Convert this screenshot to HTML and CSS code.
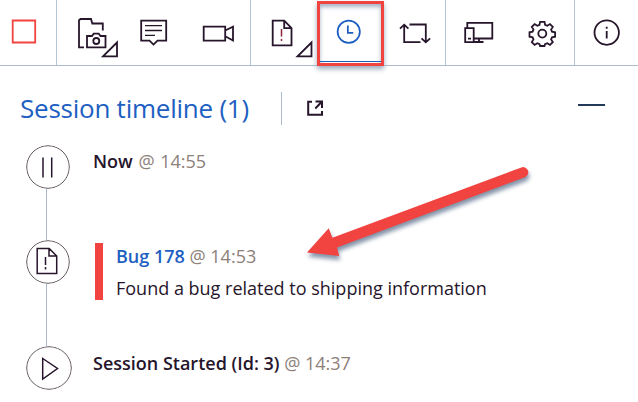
FILE: index.html
```html
<!DOCTYPE html>
<html lang="en">
<head>
<meta charset="utf-8">
<title>Session timeline</title>
<link rel="stylesheet" href="styles.css">
</head>
<body>
<nav class="toolbar">
  <div class="group stop"><svg viewBox="0 0 56 65"><path class="red" d="M12.700 20.500h22.500v22H12.700z"/></svg></div>
  <div class="group capture">
    <svg viewBox="57 0 66 65"><path d="M84 47.300h-5V20.200l1.500-1.200H91l1.300 4.500h10.500v7M87 36h5l1.700-2.300h5L100.500 36h5v11.300H87z"/><circle cx="96.300" cy="41" r="3"/><path d="M117 42.500v13.800h-14z"/></svg>
    <svg viewBox="123 0 62 65"><path d="M141.200 20.600h25v20h-8.700l-4 4-4-4h-8.300z"/><path class="thin" d="M145 25.600h17M145 30.500h17M145 35.400h10"/></svg>
    <svg viewBox="185 0 65 65"><path d="M203.700 26.600h21.500v14h-21.500zM225.200 30.500l7.800-3.900v14l-7.800-4.300"/></svg>
  </div>
  <div class="group bug"><svg viewBox="251 0 65 65"><path d="M272.700 20.600h11.500l7.300 7.500v17.200h-18.800zM284.200 20.600v7.500h7.300"/><path class="mark" d="M281.500 29v7.500M281.500 39v2"/><path d="M311.500 42.500v13.800h-14z"/></svg></div>
  <div class="group history"><svg viewBox="320 4 61 58"><circle class="blue" cx="348.700" cy="32.300" r="11.300"/><path class="blue" d="M347.800 26v7.300h5.500"/></svg></div>
  <div class="group replay"><svg viewBox="385 0 60 65"><path d="M410 24.500h16.300V42M422 38.300l4.300 4 4.300-4M421 42.200h-16.300V25M400.500 28.700l4.200-4 4.200 4"/></svg></div>
  <div class="group tools">
    <svg viewBox="446 0 64 65"><path d="M467.300 28v-5.200h25v15.700H474M465.200 28.200h8.500v14h-8.500zM474 42h9.500M479 38.500v3.500M468 38.700h3"/></svg>
    <svg viewBox="510 0 64 65"><path d="M540.100 21.800h4.400l.6 3.100 2.200.9 2.700-1.700 2.800 2.800-1.700 2.600.9 2.200 3.100.6v4.400l-3.100.6-.9 2.200 1.700 2.600-2.800 2.800-2.700-1.700-2.200.9-.6 1.900h-4.400l-.6-1.900-2.200-.9-2.700 1.700-2.800-2.800 1.700-2.600-.9-2.200-3.100-.6v-4.400l3.100-.6.9-2.200-1.700-2.600 2.800-2.800 2.700 1.700 2.200-.9z"/><circle cx="542.300" cy="33.600" r="4"/></svg>
  </div>
  <div class="group info"><svg viewBox="575 0 63 65"><circle cx="606.700" cy="32.600" r="12.200"/><path d="M606.700 31v7.500M606.700 26.800v2"/></svg></div>
</nav>
<header class="heading">
  <h1>Session timeline (1)</h1>
  <span class="rule"></span>
  <svg class="open" viewBox="0 0 16 16"><path d="M5 1.700H1.200v13H15V11M8.500 1.500H15V8M15 1.500L8.300 8.500"/></svg>
  <span class="minimize"></span>
</header>
<main class="timeline">
  <section class="event now">
    <svg class="node" viewBox="0 0 44 44"><circle cx="22" cy="22" r="21.300"/><path d="M17 12.500v20M25.700 12.500v20"/></svg>
    <p class="line"><b>Now</b> <time>@ 14:55</time></p>
  </section>
  <section class="event filed">
    <svg class="node" viewBox="0 0 44 44"><circle cx="22" cy="22" r="21.300"/><path d="M11.200 8.500h12l7.500 7.500v17.500H11.200zM23 8.500V16h7.500"/><path class="exclaim" d="M19.500 17v8M19.500 27v2.500"/></svg>
    <article class="entry">
      <p class="line"><a>Bug 178</a> <time>@ 14:53</time></p>
      <p class="note">Found a bug related to shipping information</p>
    </article>
  </section>
  <section class="event started">
    <svg class="node wide" viewBox="0 0 46 44"><ellipse cx="23" cy="22" rx="22.300" ry="21.300"/><path d="M16.700 12.500L31.500 22.500 16.700 33z"/></svg>
    <p class="line"><b>Session Started (Id: 3)</b> <time>@ 14:37</time></p>
  </section>
</main>
<svg class="pointer" viewBox="290 140 260 130"><path d="M307 252.500l21.700-24.200 3.700 9.400 189-70.300a5 5 0 0 1 3.400 9.800l-187.800 70.300 2.200 8.500z"/></svg>
</body>
</html>
```

FILE: styles.css
```css
* { box-sizing: border-box; }
body {
  margin: 0;
  width: 638px;
  height: 402px;
  overflow: hidden;
  position: relative;
  background: #fff;
  color: #26152b;
  font-family: "Open Sans", "Noto Sans", sans-serif;
}
h1, p { margin: 0; }
svg { display: block; fill: none; stroke: #26152b; stroke-width: 1.8; }
.toolbar {
  display: grid;
  grid-template-columns: 57px 194px 66px 67px 62px 129px 63px;
  height: 66px;
  border-bottom: 1px solid #adbccd;
}
.group { display: flex; height: 65px; border-right: 1px solid #b4c5d6; }
.group svg { flex: none; height: 65px; }
.stop svg { width: 56px; }
.capture svg:nth-child(1) { width: 66px; }
.capture svg:nth-child(2) { width: 62px; }
.capture svg:nth-child(3), .bug svg { width: 65px; }
.bug { border-right: 0; }
.history {
  margin-top: 1px;
  border: 3px solid #f14440;
  box-shadow: 0 3px 5px #9baabd, inset 0 3px 4px #a7b4c5;
}
.history svg { width: 61px; height: 58px; border-bottom: 1px solid #1d5eb9; }
.replay svg { width: 61px; }
.tools svg { width: 64px; }
.info { border-right: 0; }
.info svg { width: 63px; }
.red { stroke: #f14440; }
.blue { stroke: #1d5fc1; }
.thin { stroke-width: 1.3; }
.mark { stroke: #8d2636; stroke-width: 1.5; }
.exclaim { stroke-width: 1.5; }
.heading { display: flex; align-items: center; height: 78px; padding: 6px 33px 0 20px; }
h1 { width: 261px; margin-bottom: 1px; color: #1d60c2; font-size: 26px; line-height: 36px; font-weight: 400; letter-spacing: -.24px; white-space: nowrap; }
.rule { width: 1px; height: 33px; background: #adbdcd; }
.open { width: 16px; height: 16px; margin-left: 25px; stroke-width: 2; }
.minimize { width: 27px; height: 2px; margin: 0 0 6px auto; background: #233b59; }
.timeline { padding-left: 25px; background: linear-gradient(#a9b8cc, #a9b8cc) 46px 24px / 1px 210px no-repeat; }
.event { display: flex; align-items: flex-start; }
.node { flex: none; width: 44px; height: 44px; margin-left: 1px; background: #fff; border-radius: 50%; stroke-width: 1.5; }
.node circle, .node ellipse { stroke: #5d5358; stroke-width: 1; }
.wide { width: 46px; }
.now { height: 96px; padding-top: 1px; }
.filed { height: 106px; }
.line, .note { font-size: 18px; line-height: 24px; white-space: nowrap; }
.line b { font-weight: 600; }
.line a { font-weight: 600; color: #1d60c2; }
time { color: #8c8079; }
.now .line { margin: 4px 0 0 23px; word-spacing: 1px; }
.started .line { margin: 5px 0 0 21px; }
.entry { height: 57px; margin: 3px 0 0 25px; padding: 1px 0 0 13px; border-left: 8px solid #f14440; }
.note { margin-top: 8px; }
.pointer {
  position: absolute;
  left: 290px;
  top: 140px;
  width: 260px;
  height: 130px;
  fill: #f14440;
  stroke: none;
  filter: drop-shadow(1px 4px 2px #8392a8);
}
```
